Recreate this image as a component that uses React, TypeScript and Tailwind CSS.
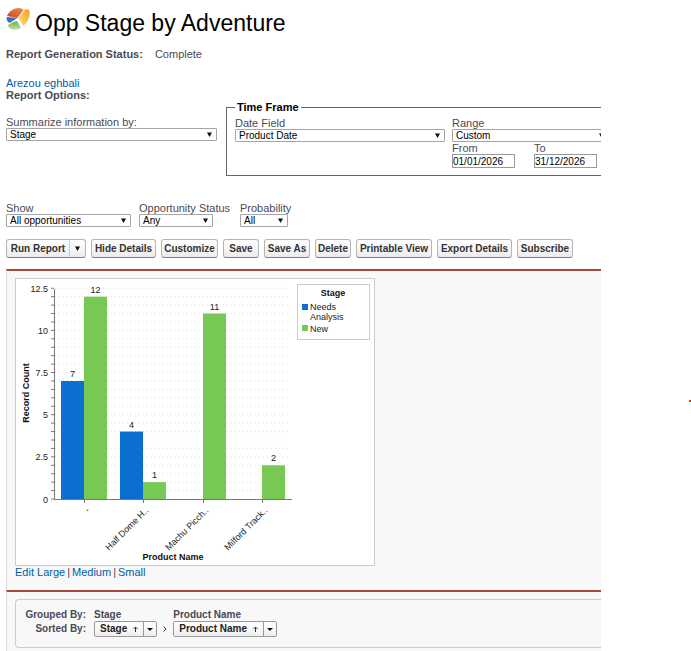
import { useId } from 'react'
import type { ReactNode } from 'react'
import { clsx } from 'clsx'

type Bar = { x: number; value: number; stage: 'analysis' | 'new' }

const bars: Bar[] = [
  { x: 46, value: 7, stage: 'analysis' },
  { x: 69, value: 12, stage: 'new' },
  { x: 105, value: 4, stage: 'analysis' },
  { x: 128, value: 1, stage: 'new' },
  { x: 188, value: 11, stage: 'new' },
  { x: 247, value: 2, stage: 'new' },
]

const products = [
  { x: 69, name: '-' },
  { x: 128, name: 'Half Dome H..' },
  { x: 188, name: 'Machu Picch..' },
  { x: 247, name: 'Milford Track..' },
]

const yLabels = [0, 2.5, 5, 7.5, 10, 12.5]
const BASE = 221
const UNIT = 16.86

const toY = (value: number) => BASE - value * UNIT

const actions = [
  { label: 'Hide Details', width: 'w-[65px]' },
  { label: 'Customize', width: 'w-[57px]' },
  { label: 'Save', width: 'w-[36px]' },
  { label: 'Save As', width: 'w-[46px]' },
  { label: 'Delete', width: 'w-[36px]' },
  { label: 'Printable View', width: 'w-[76px]' },
  { label: 'Export Details', width: 'w-[75px]' },
  { label: 'Subscribe', width: 'w-[56px]' },
]

const Arrow = ({ className }: { className?: string }) => (
  <svg viewBox="0 0 5 5" className={clsx('h-[5px] w-[5px]', className)} fill="#111" aria-hidden="true">
    <path d="M0 0.5h5L2.5 5z" />
  </svg>
)

const SelectField = ({ label, value, className }: { label: string; value: string; className: string }) => {
  const id = useId()
  return (
    <div className={clsx('shrink-0', className)}>
      <label htmlFor={id} className="block whitespace-nowrap text-[11px] leading-3">{label}</label>
      <div className="relative">
        <select id={id} className="block h-[13px] w-full appearance-none rounded-[1px] border border-[#a5a5a5] bg-white pl-[3px] text-[10px] leading-[11px] text-black">
          <option>{value}</option>
        </select>
        <Arrow className="pointer-events-none absolute top-[4px] right-[5px]" />
      </div>
    </div>
  )
}

const DateField = ({ label, value }: { label: string; value: string }) => {
  const id = useId()
  return (
    <div className="w-[63px] shrink-0">
      <label htmlFor={id} className="block text-[11px] leading-3">{label}</label>
      <input id={id} type="text" defaultValue={value} className="block h-[14px] w-full border border-[#999] bg-white text-[10px] leading-3 text-black" />
    </div>
  )
}

const buttonStyle = 'h-[19px] shrink-0 whitespace-nowrap rounded-[3px] border border-[#b5b5b5] border-b-[#7f7f7f] bg-linear-to-b from-white to-[#ececec] text-[10px] font-bold leading-4 text-[#333]'

const SortButton = ({ children }: { children: ReactNode }) => (
  <div className="flex h-4 rounded-[2px] border border-[#999] bg-linear-to-b from-white to-[#efefef] text-[#222]">
    <button type="button" className="flex items-center gap-[6px] px-[5px] text-[10px] leading-3 font-bold">
      {children}
      <svg viewBox="0 0 5 6" className="h-[6px] w-[5px]" fill="none" stroke="#333" aria-hidden="true">
        <path d="M2.5 6V1M0.5 3l2-2 2 2" />
      </svg>
    </button>
    <button type="button" aria-label="Sort options" className="flex w-[13px] items-center justify-center border-l border-[#999]">
      <svg viewBox="0 0 6 3" className="h-[3px] w-[6px]" fill="#111" aria-hidden="true"><path d="M0 0h6L3 3z" /></svg>
    </button>
  </div>
)

const ReportIcon = () => (
  <svg viewBox="0 0 24 24" className="h-6 w-6" aria-hidden="true">
    <defs>
      <linearGradient id="gold" x1="0" y1="1" x2="1" y2="0">
        <stop offset="0" stopColor="#fbe07a" />
        <stop offset="1" stopColor="#f2a01c" />
      </linearGradient>
      <linearGradient id="red" x1="0" y1="1" x2="1" y2="0">
        <stop offset="0" stopColor="#c9421f" />
        <stop offset="1" stopColor="#ee9152" />
      </linearGradient>
      <linearGradient id="green" x1="0" y1="0" x2="0" y2="1">
        <stop offset="0" stopColor="#6fae45" />
        <stop offset="1" stopColor="#c3e0ac" />
      </linearGradient>
    </defs>
    <path d="M1 8C3 3 8 0 13 0c2 0 4 1 5 2l-6 8z" fill="url(#red)" />
    <path d="M18 2c2-1 4-1 5 0 2 5-1 12-6 16l-5-8z" fill="url(#gold)" />
    <path d="M1 9l11 1-8 5C1 14 0 11 1 9z" fill="#3672bd" />
    <path d="M2 18c0-2 4-4 9-5l4 7c-5 3-12 2-13-2z" fill="url(#green)" />
    <path d="M18 2l-6 8 5 8M12 10L3 16" stroke="#fff" fill="none" />
  </svg>
)

const StageChart = () => (
  <svg viewBox="0 0 360 288" className="block h-[288px] w-[360px] font-['Liberation_Sans',Arial,sans-serif]" fontSize="9" fill="#222" role="img" aria-label="Record Count by Product Name and Stage">
    <rect x="0.5" y="0.5" width="359" height="287" fill="#fff" stroke="#ccc" />
    {Array.from({ length: 26 }, (_, i) => {
      const y = toY(i / 2)
      return (
        <g key={i}>
          {i > 0 && <path d={`M40 ${y}H276`} stroke="#ddd" strokeDasharray="1 3" />}
          <path d={`M36 ${y}h3`} stroke="#777" />
        </g>
      )
    })}
    {yLabels.map((n) => (
      <text key={n} x="33" y={toY(n) + 3.5} textAnchor="end">{n}</text>
    ))}
    {bars.map((bar) => (
      <g key={bar.x}>
        <rect x={bar.x} y={toY(bar.value)} width="23" height={bar.value * UNIT} fill={bar.stage === 'new' ? '#78c953' : '#0b6fd0'} />
        <text x={bar.x + 11.5} y={toY(bar.value) - 4} textAnchor="middle">{bar.value}</text>
      </g>
    ))}
    <path d="M39.5 11V221.5H277" fill="none" stroke="#777" />
    {products.map((product) => (
      <g key={product.name}>
        <path d={`M${product.x + 0.5} 222v3`} stroke="#777" />
        <text transform={`translate(${product.x + 6} 233) rotate(-45)`} textAnchor="end">{product.name}</text>
      </g>
    ))}
    <g fontWeight="bold" fill="#111">
      <text transform="translate(14 115) rotate(-90)" textAnchor="middle">Record Count</text>
      <text x="158" y="282" textAnchor="middle">Product Name</text>
    </g>
    <rect x="282.5" y="6.5" width="72" height="55" fill="#fff" stroke="#ccc" />
    <text x="318" y="18" textAnchor="middle" fontWeight="bold" fill="#111">Stage</text>
    <rect x="287" y="26" width="6" height="6" fill="#0b6fd0" />
    <text x="295" y="32">Needs</text>
    <text x="295" y="42">Analysis</text>
    <rect x="287" y="47" width="6" height="6" fill="#78c953" />
    <text x="295" y="54">New</text>
  </svg>
)

const App = () => {
  return (
    <div className="relative flex h-screen overflow-hidden bg-white pr-[90px] font-['Liberation_Sans',Arial,sans-serif] text-[11px] leading-3 text-[#4a4a56]">
      <main className="flex min-w-0 flex-1 flex-col overflow-hidden pl-[6px]">
        <header className="flex h-[46px] shrink-0 items-center gap-[5px]">
          <div className="pb-[6px]"><ReportIcon /></div>
          <h1 className="text-[23px] leading-8 text-black">Opp Stage by Adventure</h1>
        </header>
        <p className="flex gap-3 leading-4">
          <strong>Report Generation Status:</strong>
          <span>Complete</span>
        </p>
        <div className="mt-[15px]">
          <a href="#owner" className="block text-[#015ba7]">Arezou eghbali</a>
          <strong className="block">Report Options:</strong>
        </div>

        <div className="flex shrink-0 gap-[9px]">
          <SelectField label="Summarize information by:" value="Stage" className="mt-[15px] w-[211px]" />
          <fieldset className="h-[75px] w-[400px] shrink-0 border border-[#666] px-2">
            <legend className="px-[2px] font-bold text-black">Time Frame</legend>
            <div className="flex gap-[7px] pt-[4px]">
              <SelectField label="Date Field" value="Product Date" className="w-[210px]" />
              <div>
                <SelectField label="Range" value="Custom" className="w-[157px]" />
                <div className="flex gap-[19px]">
                  <DateField label="From" value="01/01/2026" />
                  <DateField label="To" value="31/12/2026" />
                </div>
              </div>
            </div>
          </fieldset>
        </div>

        <div className="mt-[26px] flex shrink-0 gap-2">
          <SelectField label="Show" value="All opportunities" className="w-[125px]" />
          <SelectField label="Opportunity Status" value="Any" className="w-[93px] [&>div]:w-[74px]" />
          <SelectField label="Probability" value="All" className="w-[52px] [&>div]:w-[48px]" />
        </div>

        <div className="mt-3 flex shrink-0 gap-[5px]">
          <div className={clsx(buttonStyle, 'flex w-[80px]')}>
            <button type="button" className="flex-1">Run Report</button>
            <button type="button" aria-label="Run options" className="flex w-4 items-center justify-center border-l border-[#ccc]">
              <Arrow />
            </button>
          </div>
          {actions.map((action) => (
            <button key={action.label} type="button" className={clsx(buttonStyle, action.width)}>{action.label}</button>
          ))}
        </div>

        <section className="mt-[11px] shrink-0 border-t-2 border-l border-t-[#a9483f] border-l-[#ddd] bg-[#f8f8f8] pt-[7px] pb-3 pl-2">
          <StageChart />
          <nav className="flex gap-[2px]">
            <a href="#large" className="text-[#015ba7]">Edit Large</a>|
            <a href="#medium" className="text-[#015ba7]">Medium</a>|
            <a href="#small" className="text-[#015ba7]">Small</a>
          </nav>
        </section>

        <section className="flex-1 border-t-2 border-l border-t-[#a9483f] border-l-[#ddd] bg-[#f8f8f8] pt-[7px] pl-2">
          <div className="grid h-[49px] grid-cols-[72px_auto_auto_1fr] content-start items-center gap-x-[6px] rounded-l-[4px] border border-r-0 border-[#ccc] pt-[9px] text-[10px] font-bold">
            <span className="pr-[2px] text-right">Grouped By:</span>
            <span>Stage</span>
            <span />
            <span>Product Name</span>
            <span className="pr-[2px] text-right">Sorted By:</span>
            <SortButton>Stage</SortButton>
            <svg viewBox="0 0 4 6" className="h-[6px] w-[4px]" fill="none" stroke="#333" aria-hidden="true"><path d="M0.5 0.5L3 3 0.5 5.5" /></svg>
            <div className="flex"><SortButton>Product Name</SortButton></div>
          </div>
        </section>
      </main>
      <span className="absolute top-[400px] right-0 h-[2px] w-[2px] bg-[#e0402f]" />
    </div>
  )
}

export default App
